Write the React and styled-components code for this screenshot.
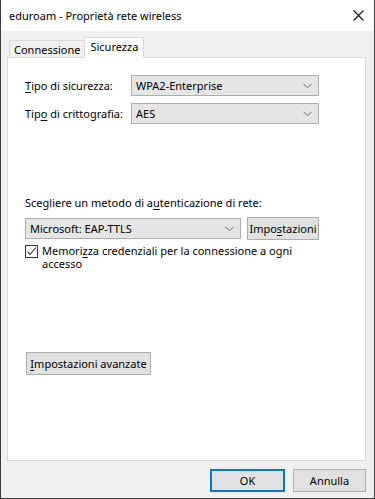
import React from "react";
import styled, { createGlobalStyle } from "styled-components";

const Global = createGlobalStyle`
  html, body { margin: 0; padding: 0; background: #f0f0f0; }
  body { font-family: "Noto Sans", "Segoe UI", sans-serif; font-size: 11px; color: #000; }
  * { box-sizing: border-box; }
`;

const Window = styled.div`
  width: 375px;
  height: 499px;
  display: flex;
  flex-direction: column;
  border: 1px solid #3c3c3c;
  border-top: none;
  background: #f0f0f0;
  white-space: nowrap;
`;

const TitleBar = styled.div`
  height: 31px;
  background: #fff;
  display: flex;
  align-items: center;
  justify-content: space-between;
  padding: 0 10px 0 8px;
`;

const Title = styled.span`
  font-size: 11px;
  color: #000;
  margin-top: -1px;
`;

const Body = styled.div`
  flex: 1;
  display: flex;
  flex-direction: column;
  padding: 6px 8px 0 6px;
`;

const Tabs = styled.div`
  display: flex;
  align-items: flex-end;
  height: 21px;
  padding-left: 2px;
  position: relative;
  z-index: 1;
  margin-bottom: -1px;
`;

const Tab = styled.div`
  height: ${p => (p.$active ? "21px" : "18px")};
  padding: ${p => (p.$active ? "0 5px 3px 5px" : "0 4px 0 4px")};
  display: flex;
  align-items: center;
  background: ${p => (p.$active ? "#fff" : "#f0f0f0")};
  border: 1px solid #d9d9d9;
  border-bottom: ${p => (p.$active ? "1px solid #fff" : "1px solid #d9d9d9")};
  margin-left: ${p => (p.$active ? "-1px" : "0")};
`;

const Panel = styled.div`
  height: 404px;
  background: #fff;
  border: 1px solid #d9d9d9;
  display: flex;
  flex-direction: column;
  padding: 17px 0 0 17px;
`;

const FieldRow = styled.div`
  display: flex;
  align-items: center;
  height: 21px;
  margin-bottom: 7px;
`;

const Label = styled.span`
  width: 106px;
`;

const Combo = styled.div`
  width: ${p => p.$w}px;
  height: 21px;
  background: #e5e5e5;
  border: 1px solid #adadad;
  display: flex;
  align-items: center;
  justify-content: space-between;
  padding: 0 6px 0 4px;
`;

const SectionLabel = styled.div`
  margin-top: 64px;
  height: 16px;
  line-height: 16px;
`;

const AuthRow = styled.div`
  display: flex;
  align-items: center;
  gap: 6px;
  margin-top: 6px;
`;

const Button = styled.div`
  width: ${p => p.$w}px;
  height: 23px;
  background: #e1e1e1;
  border: ${p => (p.$default ? "2px solid #0078d7" : "1px solid #adadad")};
  display: flex;
  align-items: center;
  justify-content: center;
`;

const CheckRow = styled.div`
  display: flex;
  align-items: flex-start;
  gap: 4px;
  margin-top: 5px;
  width: 270px;
  line-height: 13px;
  white-space: normal;
`;

const Box = styled.div`
  width: 13px;
  height: 13px;
  border: 1px solid #333;
  background: #fff;
  flex: none;
  display: flex;
  align-items: center;
  justify-content: center;
`;

const CheckText = styled.span`
  margin-top: -1px;
`;

const AdvancedWrap = styled.div`
  margin-top: 82px;
  margin-left: 1px;
`;

const Footer = styled.div`
  display: flex;
  justify-content: flex-end;
  gap: 8px;
  padding-top: 8px;
`;

const U = styled.span`
  text-decoration: underline;
  text-underline-offset: 2px;
`;

const Chevron = () => (
  <svg width="9" height="6" viewBox="0 0 9 6">
    <path d="M0.5 0.8 L4.5 4.8 L8.5 0.8" fill="none" stroke="#666" strokeWidth="1" />
  </svg>
);

const CloseIcon = () => (
  <svg width="11" height="11" viewBox="0 0 11 11">
    <path d="M0.5 0.5 L10.5 10.5 M10.5 0.5 L0.5 10.5" stroke="#111" strokeWidth="1.1" />
  </svg>
);

const Check = () => (
  <svg width="11" height="11" viewBox="0 0 11 11">
    <path d="M1.5 5.5 L4 8.5 L9.8 1.5" fill="none" stroke="#222" strokeWidth="1.1" />
  </svg>
);

export default function App() {
  return (
    <>
      <Global />
      <Window>
        <TitleBar>
          <Title>eduroam - Proprietà rete wireless</Title>
          <CloseIcon />
        </TitleBar>
        <Body>
          <Tabs>
            <Tab>Connessione</Tab>
            <Tab $active>Sicurezza</Tab>
          </Tabs>
          <Panel>
            <FieldRow>
              <Label><U>T</U>ipo di sicurezza:</Label>
              <Combo $w={188}>WPA2-Enterprise<Chevron /></Combo>
            </FieldRow>
            <FieldRow>
              <Label>Tip<U>o</U> di crittografia:</Label>
              <Combo $w={188}>AES<Chevron /></Combo>
            </FieldRow>
            <SectionLabel>Scegliere un metodo di a<U>u</U>tenticazione di rete:</SectionLabel>
            <AuthRow>
              <Combo $w={216}>Microsoft: EAP-TTLS<Chevron /></Combo>
              <Button $w={72}>Impo<U>s</U>tazioni</Button>
            </AuthRow>
            <CheckRow>
              <Box><Check /></Box>
              <CheckText>Memori<U>z</U>za credenziali per la connessione a ogni accesso</CheckText>
            </CheckRow>
            <AdvancedWrap>
              <Button $w={125}><U>I</U>mpostazioni avanzate</Button>
            </AdvancedWrap>
          </Panel>
          <Footer>
            <Button $w={75} $default>OK</Button>
            <Button $w={73}>Annulla</Button>
          </Footer>
        </Body>
      </Window>
    </>
  );
}
